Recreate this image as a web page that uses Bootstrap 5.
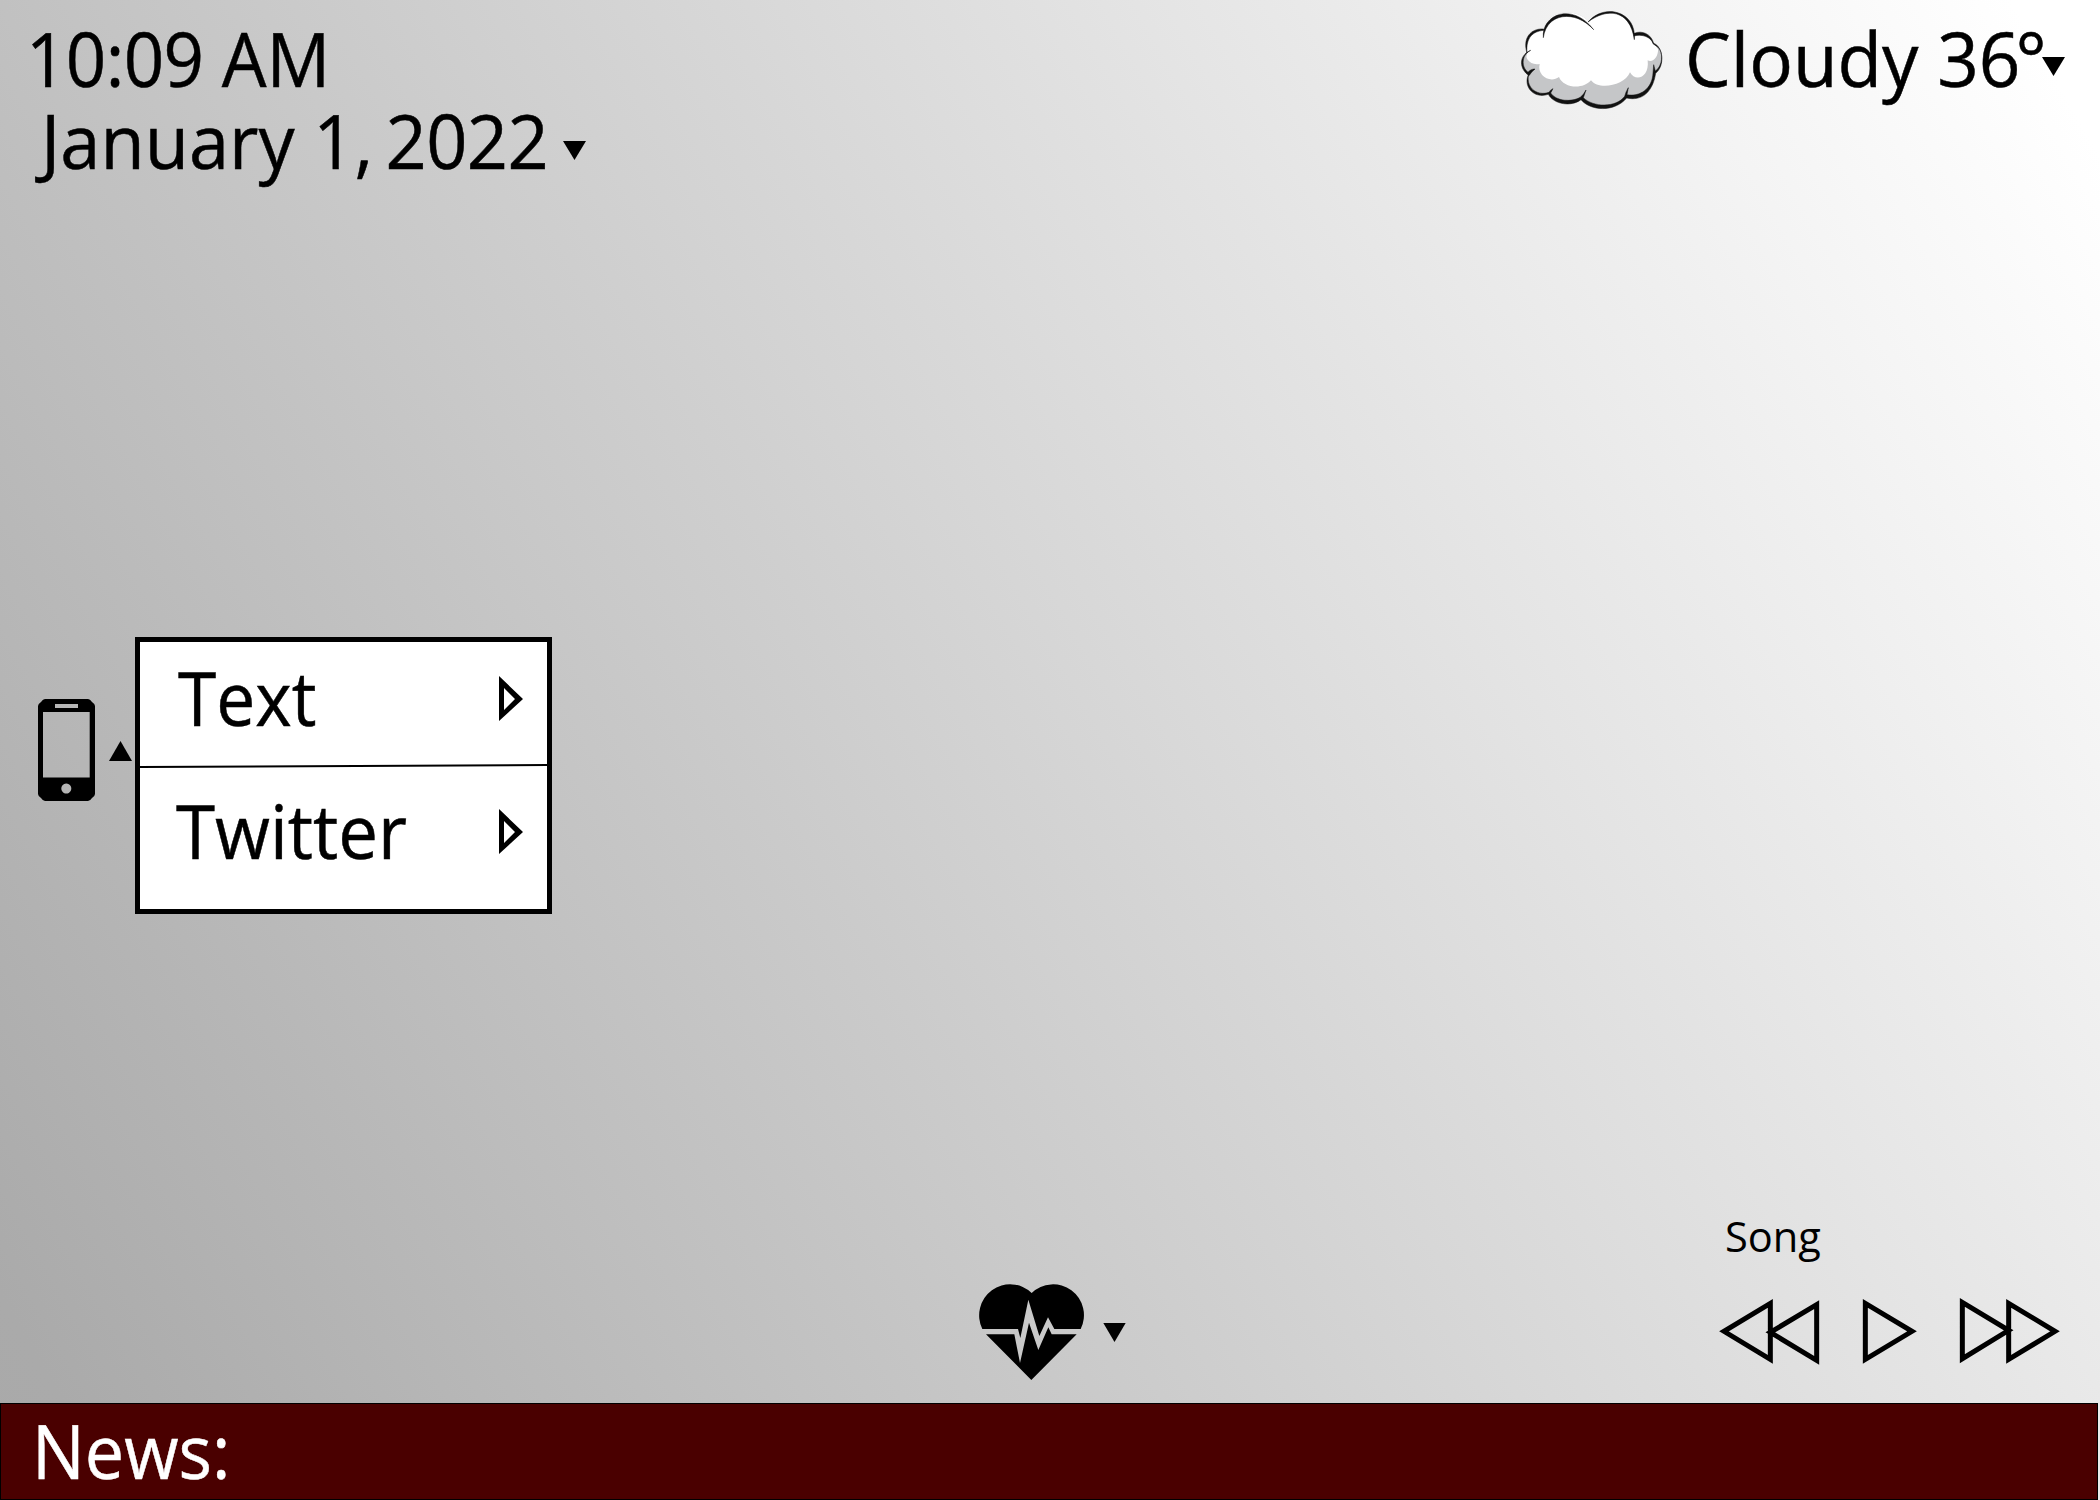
<!DOCTYPE html>
<html lang="en">
<head>
<meta charset="utf-8">
<meta name="viewport" content="width=device-width, initial-scale=1">
<title>Smart Mirror</title>
<link href="https://cdn.jsdelivr.net/npm/bootstrap@5.3.0/dist/css/bootstrap.min.css" rel="stylesheet">
<style>
body{margin:0;background:#fff;color:#000;font-family:"Open Sans","Noto Sans",sans-serif}
.mirror{width:2100px;height:1500px;background:linear-gradient(60deg,#a9a9a9 0%,#aaa 4%,#fff 97%)}
.label-xl{font-size:74.2px;line-height:82px;white-space:nowrap;display:block;transform:scaleX(var(--fit,.955));transform-origin:0 50%;-webkit-text-stroke:.5px currentColor}
.label-song{font-size:42px;line-height:50px;transform:scaleX(.99);transform-origin:0 50%;display:block}
svg{display:block;flex:none}
.topbar{height:180px;padding-top:18px}
.clock{padding-left:26px}
.time-digits{letter-spacing:-.7px}
.date-text{--fit:.972;margin-left:15px;width:522px}
.date-tail{word-spacing:-6px;letter-spacing:-.6px}
.caret-down{width:23px;height:19px}
.date-caret{margin-top:41px}
.cloud{margin-top:-18px}
.weather-text{--fit:.98;width:357px;margin-left:5px}
.degree-lead{letter-spacing:-5px}
.weather-caret{margin:39px 35px 0 0}
.messages{margin-top:457px;height:277px}
.phone{margin:62px 0 0 38px}
.caret-up{margin:104px 3px 0 14px}
.panel{width:417px;border:5px solid #000;background:#fff;height:277px}
.panel-item{padding:15px 24px 0 38px}
.item-text{height:122px;--fit:.937}
.item-twitter{height:141px;padding-top:22px;padding-left:36px;--fit:.955}
.chevron{width:24px;height:45px;margin-top:19px}
.bottom{padding-left:960px}
.player{width:400px;height:192px}
.player-song{height:39px;padding-left:25px}
.news{width:2098px;height:97px;background:#4a0000;color:#fff;border:1px solid #000;padding:6px 0 0 31px;--fit:.945}
.news-wrap{background:#ececec}
</style>
<script src="https://cdn.jsdelivr.net/npm/bootstrap@5.3.0/dist/js/bootstrap.bundle.min.js"></script>
</head>
<body>
<div class="mirror d-flex flex-column overflow-hidden">
  <header class="topbar d-flex justify-content-between align-items-start">
    <div class="clock">
      <span class="label-xl"><span class="time-digits">10:09</span> AM</span>
      <div class="d-flex align-items-start">
        <span class="label-xl date-text">January 1,<span class="date-tail"> 2022</span></span>
        <svg class="caret-down date-caret" viewBox="0 0 23 19"><path d="M0 0H23L11.5 19Z"/></svg>
      </div>
    </div>
    <div class="d-flex align-items-start">
      <svg class="cloud" width="180" height="120" viewBox="0 0 540 360">
        <path fill="#c5c6c8" d="M131 90C100 90 78 112 79 142Q79 151 84 156C66 166 60 202 88 221C74 256 106 290 147 280C167 310 213 318 243 293C270 333 350 333 379 289C420 302 458 270 462 218C492 206 498 145 460 132C454 103 425 92 403 105C397 34 320 15 267 65C224 18 135 34 131 90Z"/>
        <path fill="#fff" d="M131 90C100 90 78 112 79 142Q79 151 84 156Q76 170 82 178Q94 196 119 192C110 226 150 251 177 231C189 263 247 271 273 241C296 272 374 257 390 217C405 246 449 235 443 181C460 189 476 168 474 147Q468 137 460 132C454 103 425 92 403 105C397 34 320 15 267 65C224 18 135 34 131 90Z"/>
        <path fill="#111" stroke="#111" stroke-width="1.5" stroke-linejoin="round" d="M130 113C124 43 216 5 281 89C227 29 140 37 130 113ZM264 66C314 7 411 35 403 119C390 27 320 23 264 66ZM131 87C92 84 67 115 81 159C77 112 99 94 131 91ZM92 151C64 165 63 200 84 217C85 214 96 206 105 207Q94 216 87 227C58 208 54 167 92 151ZM88 218C73 259 109 290 147 277Q151 269 159 266L152 279C168 304 215 307 241 292Q251 284 258 270L250 293C280 323 350 323 374 289Q377 276 385 263L381 284C418 291 457 268 459 219L461 194L466 213C488 199 491 157 474 142L459 131C454 111 425 101 402 108L403 100C426 90 454 102 461 130C490 140 495 198 467 220C458 278 424 304 380 294C343 338 271 333 243 299C215 321 162 314 145 283C99 298 66 257 88 218Z"/>
      </svg>
      <span class="label-xl weather-text">Cloudy 3<span class="degree-lead">6</span>°</span>
      <svg class="caret-down weather-caret" viewBox="0 0 23 19"><path d="M0 0H23L11.5 19Z"/></svg>
    </div>
  </header>

  <section class="messages d-flex align-items-start">
    <svg class="phone" width="57" height="102" viewBox="0 0 57 102"><path fill-rule="evenodd" d="M7 0H50Q52 0 54 3Q57 5 57 7V95Q57 97 54 99Q52 102 50 102H7Q5 102 3 99Q0 97 0 95V7Q0 5 3 3Q5 0 7 0ZM5 13V78.500H51.700V13ZM17 5V9H40V5ZM28.300 84.600a5 5 0 1 0 .01 0Z"/></svg>
    <svg class="caret-up" width="23" height="20" viewBox="0 0 23 20"><path d="M0 20H23L11.5 0Z"/></svg>
    <div class="panel">
      <div class="panel-item item-text d-flex justify-content-between align-items-start">
        <span class="label-xl">Text</span>
        <svg class="chevron" viewBox="0 0 24 45"><path fill-rule="evenodd" d="M0 0L24 23L0 45ZM5 12V34L16 23Z"/></svg>
      </div>
      <svg width="407" height="4" viewBox="0 0 407 4"><path d="M0 3L407 1" stroke="#000" stroke-width="2"/></svg>
      <div class="panel-item item-twitter d-flex justify-content-between align-items-start">
        <span class="label-xl">Twitter</span>
        <svg class="chevron" viewBox="0 0 24 45"><path fill-rule="evenodd" d="M0 0L24 23L0 45ZM5 12V34L16 23Z"/></svg>
      </div>
    </div>
  </section>

  <section class="bottom d-flex justify-content-between align-items-end flex-grow-1">
    <svg width="180" height="143" viewBox="0 0 540 429">
      <path d="M67 207A93 93 0 0 1 215 99A92.500 92.500 0 0 1 362 207H283L264 172L238 228L205 119L181 234L174 207ZM78 223H163L180 309L207 188L235 270L265 202L275 223H350L214 360Z"/>
      <path d="M430 189H497L463.500 246Z"/>
    </svg>
    <div class="player">
      <div class="player-song"><span class="label-song">Song</span></div>
      <svg width="400" height="153" viewBox="0 150 1200 459">
        <g fill="none" stroke="#000" stroke-width="15">
          <path d="M211 310V478L72 394ZM350 314V481L211 397ZM496 310V478L636 394ZM787 307V476L926 391ZM926 310V478L1065 394Z"/>
        </g>
      </svg>
    </div>
  </section>

  <footer class="news-wrap"><div class="news"><span class="label-xl">News:</span></div></footer>
</div>
</body>
</html>
